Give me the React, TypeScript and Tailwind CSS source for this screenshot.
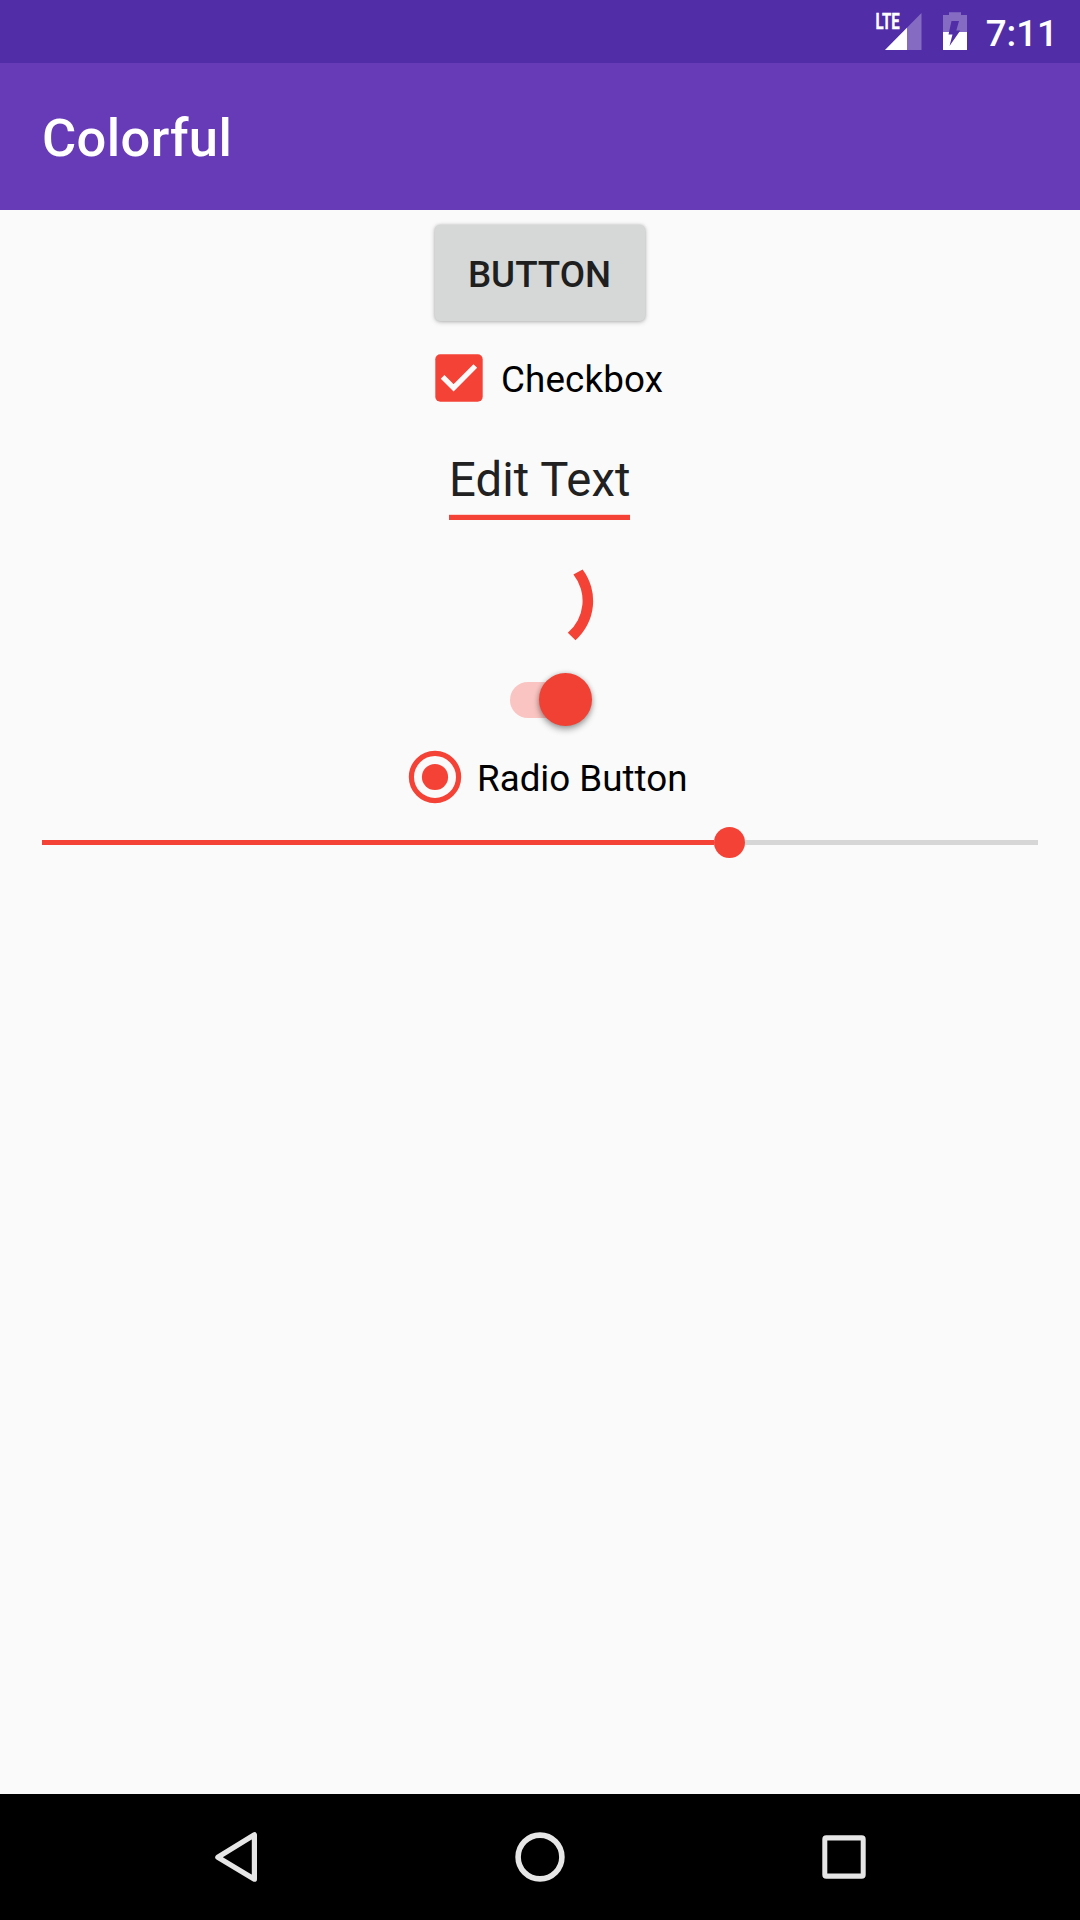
import React from "react";

function SignalIcon() {
  return (
    <svg width="50" height="63" viewBox="874 0 50 63" className="shrink-0">
      <path d="M885 50 L921.5 13 V50 Z" fill="#fff" fillOpacity="0.3" />
      <path d="M885 50 L907 27.7 V50 Z" fill="#fff" />
      <path d="M874 10 H903 V28 L899 32 H874 Z" fill="#512da8" />
      <text x="875.6" y="29.3" fontSize="22" fontWeight="700" textLength="24.2" lengthAdjust="spacingAndGlyphs" fill="#fff" stroke="#fff" strokeWidth="0.3" fontFamily="Roboto, sans-serif">LTE</text>
    </svg>
  );
}

function BatteryIcon() {
  return (
    <svg width="26" height="63" viewBox="942 0 26 63" className="shrink-0">
      <path d="M943 15 H949 V12.3 H961 V15 H967 V32 H943 Z" fill="#fff" fillOpacity="0.3" />
      <path d="M943 32 H967 V50 H943 Z" fill="#fff" />
      <path d="M951.5 21 H959 L956.3 30.5 H960.3 L949.5 46 L952.5 34.5 H948.5 Z" fill="#512da8" />
    </svg>
  );
}

function StatusBar() {
  return (
    <div className="flex h-[63px] justify-end bg-[#512da8] pr-[22px]">
      <SignalIcon />
      <div className="w-[18px]" />
      <BatteryIcon />
      <span className="ml-[18px] pt-[4px] text-[36.75px] leading-[60px] font-medium text-white">7:11</span>
    </div>
  );
}

function NavBar() {
  return (
    <nav className="flex h-[126px] items-center bg-black pl-[215px]">
      <svg width="43" height="50" viewBox="215 1832 43 50">
        <path d="M254.4 1834.8 V1879.2 L217.8 1857.3 Z" fill="none" stroke="#e6e6e6" strokeWidth="5.2" strokeLinejoin="round" />
      </svg>
      <svg width="50" height="50" viewBox="0 0 50 50" className="ml-[257px]">
        <circle cx="25" cy="25" r="21.9" fill="none" stroke="#e6e6e6" strokeWidth="5.6" />
      </svg>
      <svg width="44" height="44" viewBox="0 0 44 44" className="ml-[257px]">
        <path fillRule="evenodd" fill="#e6e6e6" d="M4.3 .3 H39.7 A4 4 0 0 1 43.7 4.3 V39.7 A4 4 0 0 1 39.7 43.7 H4.3 A4 4 0 0 1 .3 39.7 V4.3 A4 4 0 0 1 4.3 .3 Z M5.3 5.5 V38.5 H38.7 V5.5 Z" />
      </svg>
    </nav>
  );
}

export default function App() {
  return (
    <div className="flex h-[1920px] w-[1080px] flex-col overflow-hidden bg-[#fafafa] font-[Roboto,sans-serif]">
      <StatusBar />
      <header className="flex h-[147px] items-center bg-[#673ab7] pt-[4px] pl-[42px]">
        <h1 className="text-[52.5px] leading-none font-medium tracking-[0.35px] text-white">Colorful</h1>
      </header>
      <main className="flex flex-1 flex-col items-center">
        <div className="flex h-[126px] items-center">
          <button className="h-[96px] w-[210px] rounded-[5px] bg-[#d6d8d7] pt-[4px] pr-px text-[36.75px] leading-none font-medium text-[#1e1f1e] shadow-[0_1px_5px_rgba(0,0,0,0.26),0_0_3px_rgba(0,0,0,0.14)]">
            BUTTON
          </button>
        </div>
        <label className="ml-[435px] flex h-[84px] items-center self-start">
          <svg width="48" height="48" viewBox="0 0 48 48">
            <rect x=".3" y=".3" width="47.4" height="47.4" rx="5" fill="#f44336" />
            <path d="M7.6 22.8 L18.6 33.8 L40.3 12" fill="none" stroke="#fafafa" strokeWidth="5.2" />
          </svg>
          <span className="ml-[18px] pt-[5px] text-[36.75px] leading-none tracking-[0.15px] text-black">Checkbox</span>
        </label>
        <div className="mr-px flex h-[118px] w-[181px] flex-col">
          <span className="h-[94px] pt-[13px] text-[47.25px] leading-[94px] tracking-[0.1px] whitespace-nowrap text-[#212121]">Edit Text</span>
          <div className="h-[6px] shrink-0 border-t border-[#fbd5d2] bg-[#f44336]" />
        </div>
        <svg width="126" height="126" viewBox="477 538 126 126">
          <path d="M573.4 574.6 L582.6 569.4 A52.5 52.5 0 0 1 575.5 640.2 L567.8 632.8 A42 42 0 0 0 573.4 574.6 Z" fill="#f44336" />
        </svg>
        <div className="ml-[509.5px] flex h-[71px] w-[84px] items-center self-start">
          <div className="flex h-[36px] w-[76px] items-center rounded-full bg-[#f9c4c1]">
            <div className="ml-[29.8px] size-[53px] shrink-0 rounded-full bg-[#f04134] shadow-[0_4px_6px_rgba(0,0,0,0.3),0_0_5px_rgba(0,0,0,0.2)]" />
          </div>
        </div>
        <label className="ml-[408px] flex h-[84px] items-center self-start">
          <svg width="54" height="54" viewBox="0 0 54 54">
            <circle cx="27" cy="27" r="23.6" fill="none" stroke="#f44336" strokeWidth="5.2" />
            <circle cx="27" cy="27" r="13.1" fill="#f44336" />
          </svg>
          <span className="ml-[15px] pt-[5px] text-[36.75px] leading-none text-black">Radio Button</span>
        </label>
        <div className="flex h-[47px] w-[996px] items-center">
          <div className="h-[5px] w-[672px] bg-[#f44336]" />
          <div className="size-[31px] shrink-0 rounded-full bg-[#f44336]" />
          <div className="h-[5px] flex-1 bg-[#d6d6d6]" />
        </div>
      </main>
      <NavBar />
    </div>
  );
}
